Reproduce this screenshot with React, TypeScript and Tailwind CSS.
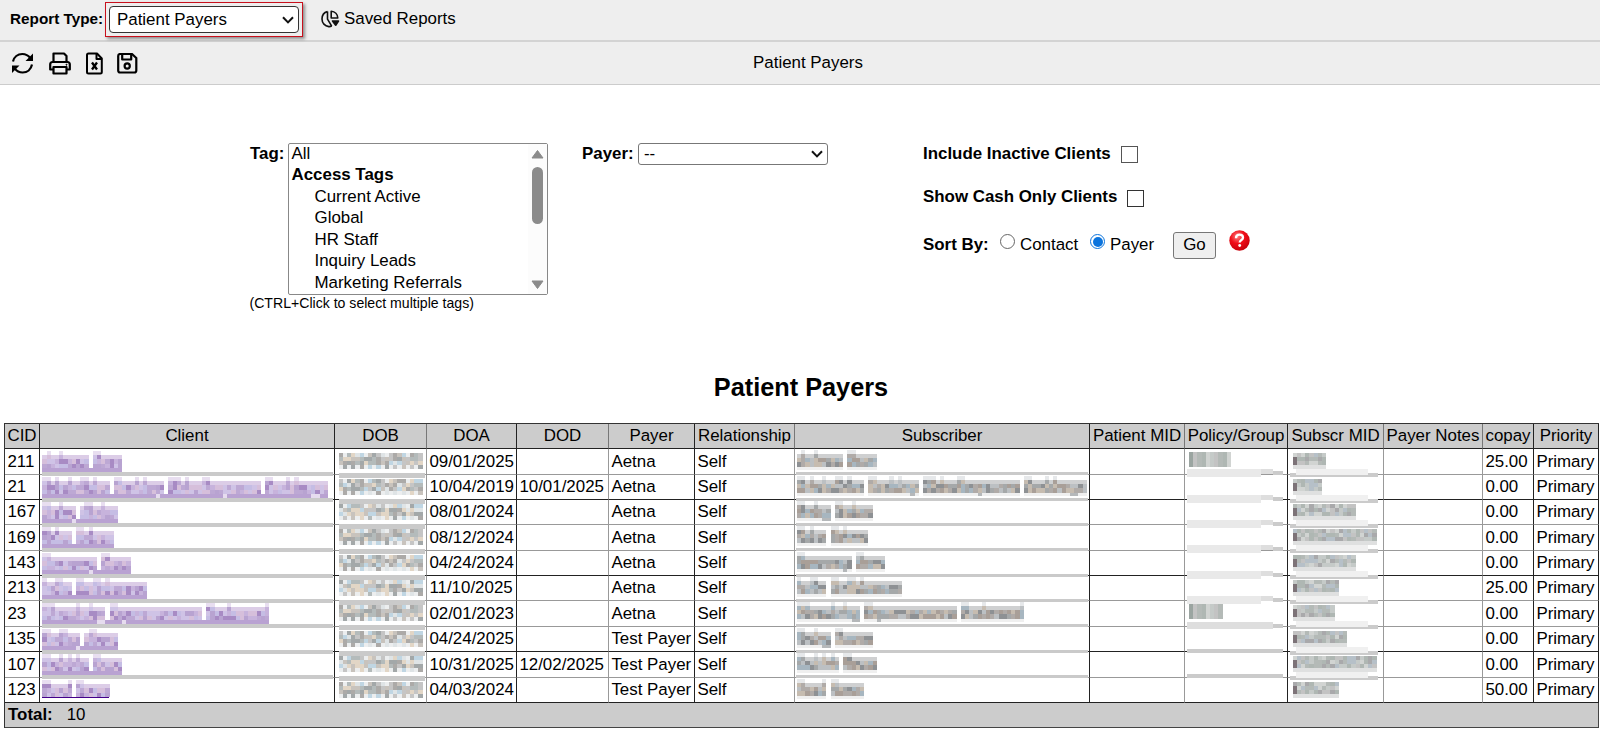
import type { ReactNode } from 'react'

type Column = { name: string; width: number; soft?: boolean }

const columns: Column[] = [
  { name: 'CID', width: 35 },
  { name: 'Client', width: 295 },
  { name: 'DOB', width: 92, soft: true },
  { name: 'DOA', width: 90 },
  { name: 'DOD', width: 92, soft: true },
  { name: 'Payer', width: 86 },
  { name: 'Relationship', width: 100, soft: true },
  { name: 'Subscriber', width: 295 },
  { name: 'Patient MID', width: 95, soft: true },
  { name: 'Policy/Group', width: 103 },
  { name: 'Subscr MID', width: 96, soft: true },
  { name: 'Payer Notes', width: 99, soft: true },
  { name: 'copay', width: 51 },
  { name: 'Priority', width: 65 },
]

// Mask patterns: T = tall block, x = mid block, d = block with a descender
type Row = {
  cid: string
  client: string
  doa: string
  dod?: string
  payer: string
  subscriber: string
  policy: number
  mid: number
  copay: string
  height: number
  soft: boolean
}

const rows: Row[] = [
  { cid: '211', client: 'xTxxTxxxxxx TTxxxxx', doa: '09/01/2025', payer: 'Aetna', subscriber: 'xTxxTxxxxxx TTxxxxx', policy: 10, mid: 8, copay: '25.00', height: 26, soft: true },
  { cid: '21', client: 'TTxTxxTxxTTxTxxx TTxxxTxTxxdx TTTxTxxxTTxxxdxxxxxxxx TTxxxTxTxxxddxx', doa: '10/04/2019', dod: '10/01/2025', payer: 'Aetna', subscriber: 'TTxTxxTxxTTxTxxx TTxxxTxTxxdx TTTxTxxxTTxxxdxxxxxxxxx TTxxxTxTxxxddxx', policy: 0, mid: 7, copay: '0.00', height: 25, soft: false },
  { cid: '167', client: 'TTxxTxxd xTTxxTxxx', doa: '08/01/2024', payer: 'Aetna', subscriber: 'TTxxTxdd TTxxTxxxx', policy: 0, mid: 15, copay: '0.00', height: 25, soft: true },
  { cid: '169', client: 'TTxTxxx TTxTxxxxx', doa: '08/12/2024', payer: 'Aetna', subscriber: 'TTxTxxx TTxTxxxxx', policy: 0, mid: 20, copay: '0.00', height: 26, soft: true },
  { cid: '143', client: 'TTxxxxxxxxxdx TTxxxxx', doa: '04/24/2024', payer: 'Aetna', subscriber: 'TTxxxxxxxxxdx TTxxxxx', policy: 0, mid: 15, copay: '0.00', height: 25, soft: false },
  { cid: '213', client: 'TxxTTxx TTxxTTxTxxxxxxxxx', doa: '11/10/2025', payer: 'Aetna', subscriber: 'TxxTTxx TTxxTTxTxxxxxxxxx', policy: 0, mid: 11, copay: '25.00', height: 25, soft: true },
  { cid: '23', client: 'TTTxxxxxTxxTxdd TTxdxxxxxxxxxxxxxxxxxx TTxxxTxxxxxxxxT', doa: '02/01/2023', payer: 'Aetna', subscriber: 'TTTxxxxxTxxTxdd TTxdxxxxxxxxxxxxxxxxxx TTxxxTxxxxxxxxT', policy: 8, mid: 10, copay: '0.00', height: 26, soft: true },
  { cid: '135', client: 'TTxxTTxxd xTTxxxxx', doa: '04/24/2025', payer: 'Test Payer', subscriber: 'TTxxTxdd TTxxxxxxx', policy: 0, mid: 13, copay: '0.00', height: 25, soft: false },
  { cid: '107', client: 'TTxxTxTxTxx TTxxxxx', doa: '10/31/2025', dod: '12/02/2025', payer: 'Test Payer', subscriber: 'TTxxTxTxTx TTxxxxxx', policy: 0, mid: 20, copay: '0.00', height: 26, soft: true },
  { cid: '123', client: 'TTxxxxT TTxxxxxx', doa: '04/03/2024', payer: 'Test Payer', subscriber: 'TTxxxxT TTxxxxxx', policy: 0, mid: 11, copay: '50.00', height: 25, soft: false },
]

const tags = ['Current Active', 'Global', 'HR Staff', 'Inquiry Leads', 'Marketing Referrals']

const BLOCK = 4.2
const purples = ['#b8a3d1', '#c7b3dc', '#a88bc4', '#cfc3e6', '#d6bfdb', '#bda8d4', '#c5bde4']
const grays = ['#a5a8a9', '#b0aba8', '#8e9194', '#bcc0c3', '#a99f98', '#a7b6c0', '#c6bcb0']
const dates = ['#b4bbbb', '#c8c3bd', '#a3a8a9', '#dfe4e6', '#c0d6e3', '#e2d6c6', '#acaaa8', '#c5c5c5']
const greens = ['#c5cac8', '#b4bab7', '#d1d4d2', '#c3c3c3', '#afb7b3']

function noise(x: number, y: number, seed: number) {
  let n = Math.imul(x + 11, 374761393) ^ Math.imul(y + 7, 668265263) ^ Math.imul(seed + 3, 1274126177)
  n = Math.imul(n ^ (n >>> 13), 1274126177)
  return (n ^ (n >>> 16)) >>> 0
}

function pick(list: string[], x: number, y: number, seed: number) {
  return list[noise(x, y, seed) % list.length]
}

function Blur({ children }: { children: ReactNode }) {
  return (
    <svg className="absolute left-0 top-0 z-10 h-px w-px overflow-visible" shapeRendering="crispEdges">
      {children}
    </svg>
  )
}

function NameMask({ pattern, seed, link, last }: { pattern: string; seed: number; link?: boolean; last?: boolean }) {
  const colors = link ? purples : grays
  const x0 = link ? 2.4 : 2
  const y0 = link ? 2 : 0.8
  return (
    <Blur>
      {pattern.split('').map((c, i) => {
        const x = x0 + i * BLOCK
        if (c === ' ') return null
        return (
          <g key={i}>
            <rect x={x} y={y0} width={BLOCK} height={BLOCK} fill={c === 'T' ? (link ? '#e8def0' : '#e6e8ea') : '#fff'} />
            {[1, 2, 3].map((r) => (
              <rect
                key={r}
                x={x}
                y={y0 + r * BLOCK}
                width={BLOCK}
                height={BLOCK}
                fill={r === 1 && c !== 'T' ? (link ? '#dccde7' : '#cfd0d1') : pick(colors, i, r, seed)}
              />
            ))}
            {!link && <rect x={x} y={y0 + 4 * BLOCK} width={BLOCK} height={3.5} fill={c === 'd' ? '#b5b8ba' : '#efefef'} />}
          </g>
        )
      })}
      {link &&
        !last &&
        pattern.split('').map((c, i) => (
          <rect key={i} x={x0 + i * BLOCK} y={18.8} width={BLOCK} height={4} fill={c === 'd' ? '#e6dcef' : '#b9a2d2'} />
        ))}
      {link && last && <rect x={x0} y={18.5} width={pattern.length * BLOCK - 1} height={1.3} fill="#430089" />}
      {!last && <rect x={link ? 2 : 1} y={link ? 23 : 22.5} width={link ? 291 : 292} height={3.8} fill="#cacaca" />}
    </Blur>
  )
}

function DateMask({ seed, last }: { seed: number; last?: boolean }) {
  return (
    <Blur>
      {Array.from({ length: 20 }, (_, i) => (
        <g key={i}>
          {[0, 1, 2, 3].map((r) => (
            <rect
              key={r}
              x={3.5 + i * BLOCK}
              y={3.5 + r * BLOCK}
              width={BLOCK}
              height={BLOCK}
              fill={(r === 3 && i % 2 === 0) || (r === 0 && i % 5 === 1) ? '#eceeef' : pick(dates, i, r, seed % 3)}
            />
          ))}
        </g>
      ))}
      {!last && <rect x={4} y={24} width={86} height={4.5} fill="#cacaca" />}
    </Blur>
  )
}

function PolicyMask({ blocks, index }: { blocks: number; index: number }) {
  return (
    <Blur>
      {Array.from({ length: blocks }, (_, i) => (
        <rect key={i} x={4 + i * BLOCK} y={3} width={BLOCK} height={15} fill={i === 0 ? '#9ba5a1' : greens[(i * 3) % 5]} />
      ))}
      {index < 6 && (
        <>
          <rect x={2} y={20} width={86} height={5} fill="#dedede" />
          <rect x={2} y={20} width={74} height={8} fill="#e9e9e9" />
          <rect x={88} y={22} width={10} height={4} fill="#cbcbcb" />
        </>
      )}
      {index === 6 && (
        <>
          <rect x={2} y={21} width={86} height={7} fill="#dedede" />
          <rect x={88} y={23} width={10} height={4} fill="#cbcbcb" />
        </>
      )}
      {(index === 7 || index === 8) && <rect x={2} y={22} width={96} height={4} fill="#cbcbcb" />}
    </Blur>
  )
}

function MidMask({ blocks, index, last }: { blocks: number; index: number; last?: boolean }) {
  return (
    <Blur>
      {Array.from({ length: blocks }, (_, i) => (
        <g key={i}>
          {[0, 1, 2, 3].map((r) => (
            <rect
              key={r}
              x={4.5 + i * BLOCK}
              y={4 + r * 3.9}
              width={BLOCK}
              height={3.9}
              fill={i === 0 && (r === 1 || r === 2) ? '#7d7378' : r === 3 ? '#dfe0e0' : pick([...greens, '#a9a9ab', '#b6c0c8'], i, r, index)}
            />
          ))}
        </g>
      ))}
      {!last && (
        <>
          <rect x={2} y={24} width={88} height={4} fill="#cbcbcb" />
          <rect x={8} y={20} width={72} height={6} fill="#f0f0f0" />
        </>
      )}
    </Blur>
  )
}

function Cell({ col, soft, children }: { col: number; soft?: boolean; children?: ReactNode }) {
  return (
    <td
      className={`relative whitespace-nowrap border-b border-r py-0 pl-[2.4px] pr-0 ${
        soft ? 'border-b-[#999]' : 'border-b-[#222]'
      } ${columns[col].soft ? 'border-r-[#999]' : 'border-r-[#222]'}`}
    >
      {children}
    </td>
  )
}

function Chevron() {
  return (
    <svg width="12" height="8" viewBox="0 0 12 8" fill="none" stroke="#111" strokeWidth="2">
      <path d="M1 1.2 6 6.4 11 1.2" />
    </svg>
  )
}

function TopBar() {
  return (
    <div className="flex h-[42px] items-start border-b-2 border-[#d3d3d3] bg-[#eee]">
      <span className="ml-[10px] mt-[8px] w-[94px] whitespace-nowrap text-[15.3px] leading-[22px] font-bold">Report Type:</span>
      <div className="ml-px mt-[2px] h-[35px] w-[198px] border border-[#c8101c] p-[3px] shadow-[2px_2px_3px_rgba(0,0,0,0.4)]">
        <div className="flex h-[27px] w-[190px] items-center justify-between rounded-[4px] border border-[#333] bg-white pl-[7px] pr-[4px]">
          <span>Patient Payers</span>
          <Chevron />
        </div>
      </div>
      <svg className="ml-[18px] mt-[10px]" width="19" height="18" viewBox="0 0 19 18" fill="none" stroke="#111" strokeWidth="1.6" strokeLinejoin="round">
        <path d="M6.500 1.600C3.200 2.400 1 5.400 1 9c0 4 2.800 7.200 6.800 7.600 1.200.1 2-.1 2.900-.5" />
        <path d="M6.500 1.600v7.600l4.200 6.900" />
        <path d="M10.200 1.200v6.800h6.600C16.600 4.200 13.900 1.500 10.200 1.200Z" />
        <path d="M11.500 11h6l-2.800 4.200Z" fill="#111" />
      </svg>
      <span className="ml-[4px] mt-[8px] leading-[22px]">Saved Reports</span>
    </div>
  )
}

function Toolbar() {
  return (
    <div className="grid h-[43px] grid-cols-3 border-b border-[#ccc] bg-[#eee]">
      <div className="flex items-start pl-[11px] pt-[10px] text-black">
        <svg width="23" height="23" viewBox="0 0 23 23" fill="none" stroke="currentColor" strokeWidth="2.2">
          <path d="M2 9.500C3 5 6.800 2 11.300 2c3.300 0 6 1.400 8 4.200" />
          <path d="M21 12.500C20 17.500 16.200 20.500 11.700 20.500c-3.300 0-6-1.400-8-4.200" />
          <path d="M22 1.500V9h-7.500Z" fill="currentColor" stroke="none" />
          <path d="M1 21v-7.500h7.500Z" fill="currentColor" stroke="none" />
        </svg>
        <svg className="ml-[15px]" width="22" height="23" viewBox="0 0 22 23" fill="none" stroke="currentColor" strokeWidth="2.2" strokeLinejoin="round">
          <path d="M4.500 10V1.500h10.500l2.500 2.500v6" />
          <path d="M4.500 17.500H1.200V12.500c0-1.500 1-2.500 2.500-2.500h14.600c1.500 0 2.500 1 2.500 2.500v5h-3.300" />
          <path d="M4.500 15h13v6.500h-13Z" />
          <circle cx="17.500" cy="12.700" r=".5" fill="currentColor" strokeWidth="1" />
        </svg>
        <svg className="ml-[15px]" width="17" height="23" viewBox="0 0 17 23" fill="none" stroke="currentColor" strokeWidth="2" strokeLinejoin="round">
          <path d="M1 3c0-1 .5-1.500 1.500-1.500H11L15.800 6.500V20c0 1-.5 1.500-1.500 1.500H2.500C1.500 21.500 1 21 1 20Z" />
          <path d="M10.500 1.500V7h5.300" />
          <path d="m6 10.500 5 7M11 10.500l-5 7" strokeWidth="2.300" />
        </svg>
        <svg className="ml-[14px] mt-[1px]" width="21" height="21" viewBox="0 0 21 21" fill="none" stroke="currentColor" strokeWidth="2.200" strokeLinejoin="round">
          <path d="M1.200 3c0-1.200.8-2 2-2H15l4.300 4v12.500c0 1.200-.8 2-2 2H3.200c-1.200 0-2-.8-2-2Z" />
          <path d="M5.200 1v5.500h9V1" />
          <circle cx="10.200" cy="13" r="2.600" />
        </svg>
      </div>
      <div className="pl-[16px] pt-[10px] text-center leading-[22px]">Patient Payers</div>
    </div>
  )
}

function TagList() {
  return (
    <div className="flex h-[152px] w-[260px] justify-between rounded-[2px] border border-[#888] bg-white">
      <div className="pl-[2.500px] leading-[21.5px]">
        <div className="-mt-[1.500px]">All</div>
        <div className="font-bold">Access Tags</div>
        {tags.map((tag) => (
          <div key={tag} className="pl-[23px]">
            {tag}
          </div>
        ))}
      </div>
      <div className="flex w-[19px] flex-col items-center bg-[#fcfcfc]">
        <svg className="mt-[5px]" width="13" height="10" viewBox="0 0 13 10">
          <path d="M6.500 1.500 12 9H1Z" fill="#8b8b8b" stroke="#8b8b8b" strokeLinejoin="round" />
        </svg>
        <div className="mt-[8px] h-[57px] w-[11px] rounded-full bg-[#8b8b8b]" />
        <svg className="mt-auto mb-[4px]" width="13" height="10" viewBox="0 0 13 10">
          <path d="M6.500 8.500 12 1H1Z" fill="#8b8b8b" stroke="#8b8b8b" strokeLinejoin="round" />
        </svg>
      </div>
    </div>
  )
}

function Filters() {
  return (
    <div className="flex h-[287px] items-start pl-[249px] pt-[58px]">
      <div className="w-[333px]">
        <div className="flex">
          <span className="w-[39px] pl-[1px] leading-[22px] font-bold">Tag:</span>
          <TagList />
        </div>
        <div className="pl-[0.500px] text-[14.1px] leading-[17px]">(CTRL+Click to select multiple tags)</div>
      </div>
      <div className="flex w-[341px]">
        <span className="w-[56px] leading-[22px] font-bold">Payer:</span>
        <div className="flex h-[22px] w-[190px] items-center justify-between rounded-[3px] border border-[#777] bg-white pl-[5px] pr-[4px]">
          <span>--</span>
          <Chevron />
        </div>
      </div>
      <div>
        <div className="flex h-[43px] leading-[22px]">
          <b>Include Inactive Clients</b>
          <span className="ml-[10px] mt-[3px] h-[17px] w-[17px] border border-[#555]" />
        </div>
        <div className="flex h-[44px] leading-[22px]">
          <b>Show Cash Only Clients</b>
          <span className="ml-[10px] mt-[4px] h-[17px] w-[17px] border border-[#333]" />
        </div>
        <div className="flex pt-[3px] leading-[24px]">
          <b className="w-[77px]">Sort By:</b>
          <span className="mt-[1px] h-[15px] w-[15px] rounded-full border border-[#666] bg-white" />
          <span className="w-[75px] pl-[5px]">Contact</span>
          <span className="mt-[1px] flex h-[15px] w-[15px] items-center justify-center rounded-full border-[1.500px] border-[#0b74dd] bg-white">
            <span className="h-[10px] w-[10px] rounded-full bg-[#0b74dd]" />
          </span>
          <span className="w-[68px] pl-[5px]">Payer</span>
          <span className="-mt-[1px] flex h-[27px] w-[43px] items-center justify-center rounded-[3px] border border-[#777] bg-[#efefef] pb-[2px]">
            Go
          </span>
          <svg className="-mt-[3px] ml-[13px]" width="21" height="21" viewBox="0 0 21 21">
            <defs>
              <radialGradient id="help" cx=".4" cy=".3" r=".7">
                <stop offset="0" stopColor="#ff8080" />
                <stop offset=".5" stopColor="#f00d18" />
                <stop offset="1" stopColor="#c8000b" />
              </radialGradient>
            </defs>
            <circle cx="10.500" cy="10.500" r="10.200" fill="url(#help)" />
            <path d="M7 8.200c0-2.300 1.500-3.500 3.500-3.500s3.500 1.200 3.500 3c0 2.300-3.300 2.300-3.300 4.800" fill="none" stroke="#fff" strokeWidth="2.300" />
            <circle cx="10.700" cy="15.500" r="1.400" fill="#fff" />
          </svg>
        </div>
      </div>
    </div>
  )
}

function ReportTable() {
  return (
    <table className="ml-[4px] w-[1595px] table-fixed border-separate border-spacing-0 border-l border-t border-[#333]">
      <colgroup>
        {columns.map((c) => (
          <col key={c.name} style={{ width: c.width }} />
        ))}
      </colgroup>
      <thead>
        <tr className="h-[25px] bg-[#ccc]">
          {columns.map((c) => (
            <th
              key={c.name}
              className={`whitespace-nowrap border-b border-r border-b-[#222] p-0 text-center font-normal ${c.soft ? 'border-r-[#777]' : 'border-r-[#222]'}`}
            >
              {c.name}
            </th>
          ))}
        </tr>
      </thead>
      <tbody>
        {rows.map((r, i) => {
          const last = i === rows.length - 1
          return (
            <tr key={r.cid} style={{ height: r.height }}>
              <Cell col={0} soft={r.soft}>{r.cid}</Cell>
              <Cell col={1} soft={r.soft}><NameMask pattern={r.client} seed={i} link last={last} /></Cell>
              <Cell col={2} soft={r.soft}><DateMask seed={i} last={last} /></Cell>
              <Cell col={3} soft={r.soft}>{r.doa}</Cell>
              <Cell col={4} soft={r.soft}>{r.dod}</Cell>
              <Cell col={5} soft={r.soft}>{r.payer}</Cell>
              <Cell col={6} soft={r.soft}>Self</Cell>
              <Cell col={7} soft={r.soft}><NameMask pattern={r.subscriber} seed={i + 20} last={last} /></Cell>
              <Cell col={8} soft={r.soft} />
              <Cell col={9} soft={r.soft}><PolicyMask blocks={r.policy} index={i} /></Cell>
              <Cell col={10} soft={r.soft}><MidMask blocks={r.mid} index={i} last={last} /></Cell>
              <Cell col={11} soft={r.soft} />
              <Cell col={12} soft={r.soft}>{r.copay}</Cell>
              <Cell col={13} soft={r.soft}>Primary</Cell>
            </tr>
          )
        })}
        <tr className="h-[25px] bg-[#ccc]">
          <td colSpan={14} className="border-b border-r border-[#444] py-0 pl-[3px] pr-0">
            <b>Total:</b>
            <span className="ml-[14px]">10</span>
          </td>
        </tr>
      </tbody>
    </table>
  )
}

export default function App() {
  return (
    <div className="h-[729px] w-[1600px] overflow-hidden bg-white font-['Liberation_Sans',Arial,sans-serif] text-[16.9px] leading-[22px] text-black">
      <TopBar />
      <Toolbar />
      <Filters />
      <h1 className="h-[51px] pl-[2px] text-center text-[25.3px] leading-[30px] font-bold">Patient Payers</h1>
      <ReportTable />
    </div>
  )
}
